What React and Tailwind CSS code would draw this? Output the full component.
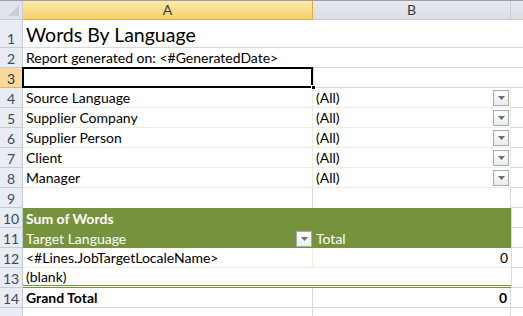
const font = { fontFamily: 'Lato, "Open Sans", sans-serif' };

const Drop = ({ className = '' }) => (
  <div className={`w-[16px] h-[16px] border border-[#a5abb4] bg-gradient-to-b from-[#ffffff] to-[#e9ecf0] flex items-center justify-center ${className}`}>
    <svg width="7" height="4" viewBox="0 0 7 4"><path d="M0 0h7L3.5 4z" fill="#6b6f75" /></svg>
  </div>
);

const filters = ['Source Language', 'Supplier Company', 'Supplier Person', 'Client', 'Manager'];

const RowHead = ({ n, h = 'h-[20px]', active }) => (
  <div className={`${h} w-[23px] shrink-0 flex items-end justify-center pb-[1px] text-[14px] border-r border-b ${active ? 'bg-[#f9d99f] border-[#e0b555] text-[#333]' : 'bg-[#e9edf3] border-[#c5cbd3] text-[#3b4a5c]'}`}>{n}</div>
);

export default function App() {
  return (
    <div className="w-[523px] h-[316px] overflow-hidden bg-white text-black text-[14px] leading-none" style={font}>
      {/* column headers */}
      <div className="flex h-[20px] border-t border-[#9aa1ab]">
        <div className="w-[23px] shrink-0 bg-[#e1e5eb] border-r border-b border-[#c5cbd3] relative">
          <div className="absolute right-[3px] bottom-[3px] w-0 h-0 border-l-[11px] border-l-transparent border-b-[11px] border-b-[#c9ced6]" />
        </div>
        <div className="w-[290px] shrink-0 bg-gradient-to-b from-[#fde9a8] to-[#f7d26c] border-r border-b border-[#e3a93c] flex items-center justify-center text-[#3a3a3a]">A</div>
        <div className="w-[198px] shrink-0 bg-gradient-to-b from-[#e6e9ee] to-[#dadfe6] border-r border-b border-[#c5cbd3] flex items-center justify-center text-[#3a3a3a]">B</div>
        <div className="flex-1 bg-gradient-to-b from-[#e6e9ee] to-[#dadfe6] border-b border-[#c5cbd3]" />
      </div>

      {/* row 1 */}
      <div className="flex">
        <RowHead n="1" h="h-[28px]" />
        <div className="w-[290px] shrink-0 h-[28px] border-b border-[#d9d9d9] flex items-end pl-[3px] pb-[3px] text-[19.5px]">Words By Language</div>
        <div className="w-[198px] shrink-0 h-[28px] border-b border-[#d9d9d9]" />
        <div className="flex-1 h-[28px] border-b border-[#d9d9d9]" />
      </div>

      {/* row 2 */}
      <div className="flex">
        <RowHead n="2" />
        <div className="w-[290px] shrink-0 h-[20px] border-b border-[#d9d9d9] flex items-end pl-[3px] pb-[2px] whitespace-nowrap">Report generated on: &lt;#GeneratedDate&gt;</div>
        <div className="w-[198px] shrink-0 h-[20px] border-b border-[#d9d9d9]" />
        <div className="flex-1 h-[20px] border-b border-[#d9d9d9]" />
      </div>

      {/* row 3 selected */}
      <div className="flex">
        <RowHead n="3" active />
        <div className="w-[290px] shrink-0 h-[20px] relative">
          <div className="absolute -left-[1px] -top-[1px] w-[291px] h-[21px] border-2 border-black" />
          <div className="absolute -right-[3px] -bottom-[2px] w-[5px] h-[5px] bg-black border border-white" />
        </div>
        <div className="w-[198px] shrink-0 h-[20px] border-b border-l border-[#d9d9d9]" />
        <div className="flex-1 h-[20px] border-b border-[#d9d9d9]" />
      </div>

      {/* rows 4-8 filters */}
      {filters.map((f, i) => (
        <div className="flex" key={f}>
          <RowHead n={i + 4} />
          <div className="w-[290px] shrink-0 h-[20px] border-b border-r border-[#eeefdf] flex items-end pl-[3px] pb-[2px]">{f}</div>
          <div className="w-[198px] shrink-0 h-[20px] border-b border-r border-[#eeefdf] flex items-end justify-between pl-[3px] pr-[1px]">
            <span className="pb-[2px]">(All)</span>
            <Drop className="mb-[1px]" />
          </div>
          <div className="flex-1 h-[20px] border-b border-[#d9d9d9]" />
        </div>
      ))}

      {/* row 9 */}
      <div className="flex">
        <RowHead n="9" />
        <div className="w-[290px] shrink-0 h-[20px] border-r border-[#d9d9d9]" />
        <div className="w-[198px] shrink-0 h-[20px] border-r border-[#d9d9d9]" />
        <div className="flex-1 h-[20px] border-b border-[#d9d9d9]" />
      </div>

      {/* row 10 */}
      <div className="flex">
        <RowHead n="10" />
        <div className="w-[488px] shrink-0 h-[20px] bg-[#76923c] text-white font-bold flex items-end pl-[3px] pb-[2px]">Sum of Words</div>
        <div className="flex-1 h-[20px] border-l border-b border-[#d9d9d9]" />
      </div>

      {/* row 11 */}
      <div className="flex">
        <RowHead n="11" />
        <div className="w-[290px] shrink-0 h-[20px] bg-[#76923c] text-white flex items-end justify-between pl-[3px] pr-[1px]">
          <span className="pb-[2px]">Target Language</span>
          <Drop className="mb-[1px]" />
        </div>
        <div className="w-[198px] shrink-0 h-[20px] bg-[#76923c] text-white flex items-end pl-[3px] pb-[2px]">Total</div>
        <div className="flex-1 h-[20px] border-l border-b border-[#d9d9d9]" />
      </div>

      {/* row 12 */}
      <div className="flex">
        <RowHead n="12" />
        <div className="w-[290px] shrink-0 h-[20px] border-b border-r border-[#eeefdf] flex items-end pl-[3px] pb-[2px] whitespace-nowrap">&lt;#Lines.JobTargetLocaleName&gt;</div>
        <div className="w-[198px] shrink-0 h-[20px] border-b border-[#eeefdf] flex items-end justify-end pr-[3px] pb-[2px]">0</div>
        <div className="flex-1 h-[20px] border-l border-b border-[#d9d9d9]" />
      </div>

      {/* row 13 */}
      <div className="flex">
        <RowHead n="13" />
        <div className="w-[290px] shrink-0 h-[20px] border-b-[3px] border-double border-[#76923c] flex items-end pl-[3px] pb-[1px]">(blank)</div>
        <div className="w-[198px] shrink-0 h-[20px] border-b-[3px] border-double border-[#76923c]" />
        <div className="flex-1 h-[20px] border-l border-b border-[#d9d9d9]" />
      </div>

      {/* row 14 */}
      <div className="flex">
        <RowHead n="14" />
        <div className="w-[290px] shrink-0 h-[20px] border-b border-r border-[#d9d9d9] font-bold flex items-end pl-[3px] pb-[2px]">Grand Total</div>
        <div className="w-[198px] shrink-0 h-[20px] border-b border-r border-[#d9d9d9] font-bold flex items-end justify-end pr-[3px] pb-[2px]">0</div>
        <div className="flex-1 h-[20px] border-b border-[#d9d9d9]" />
      </div>

      {/* row 15, mostly below the fold */}
      <div className="flex">
        <div className="h-[20px] w-[23px] shrink-0 bg-[#e9edf3] border-r border-[#c5cbd3]" />
        <div className="w-[290px] shrink-0 h-[20px] border-r border-[#d9d9d9]" />
        <div className="w-[198px] shrink-0 h-[20px] border-r border-[#d9d9d9]" />
      </div>
    </div>
  );
}
